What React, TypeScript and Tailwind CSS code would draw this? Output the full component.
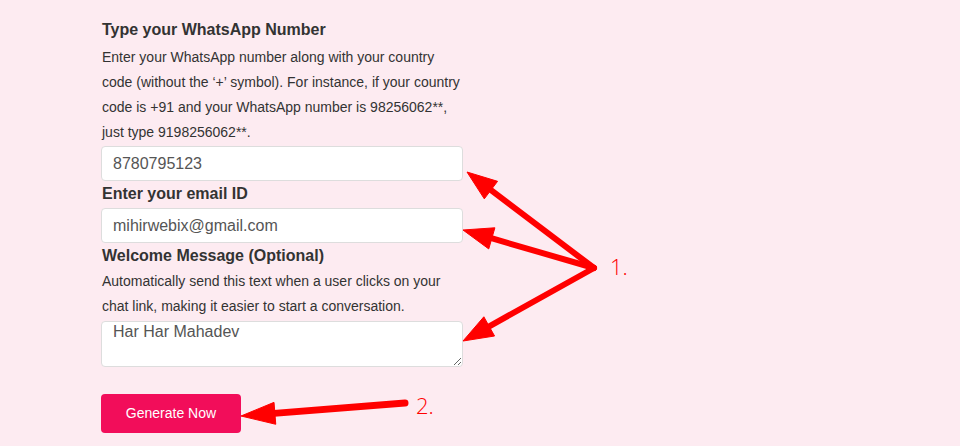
import React from 'react'

type Pt = [number, number]

// arrow with a filled head, geometry worked out from tail -> tip
function Arrow({ from, to, head = 30, half = 11, width = 6 }: { from: Pt; to: Pt; head?: number; half?: number; width?: number }) {
  const dx = to[0] - from[0]
  const dy = to[1] - from[1]
  const len = Math.hypot(dx, dy)
  const ux = dx / len
  const uy = dy / len
  const bx = to[0] - ux * head
  const by = to[1] - uy * head
  const p1 = `${bx - uy * half},${by + ux * half}`
  const p2 = `${bx + uy * half},${by - ux * half}`
  const ex = to[0] - ux * (head - 4)
  const ey = to[1] - uy * (head - 4)
  return (
    <g fill="#ff0000" stroke="#ff0000">
      <line x1={from[0]} y1={from[1]} x2={ex} y2={ey} strokeWidth={width} strokeLinecap="round" />
      <polygon points={`${to[0]},${to[1]} ${p1} ${p2}`} strokeWidth={1} strokeLinejoin="miter" />
    </g>
  )
}

export default function App() {
  return (
    <div className="relative h-[446px] w-[960px] overflow-hidden bg-[#fdebf1] font-['Liberation_Sans',Arial,sans-serif] text-[#333]">
      <div className="ml-[101px] flex w-[362px] flex-col pt-[19px]">
        <h2 className="pl-[1px] text-[16px] font-bold leading-[22px]">Type your WhatsApp Number</h2>
        <p className="mt-[4px] pl-[1px] text-[14px] leading-[25px]">
          Enter your WhatsApp number along with your country code (without the ‘+’ symbol). For instance, if your country
          code is +91 and your WhatsApp number is 98256062**, just type 9198256062**.
        </p>
        <input
          defaultValue="8780795123"
          className="mt-[1px] h-[35px] w-full rounded-[4px] border border-[#ddd] bg-white px-[11px] text-[16px] text-[#555] outline-none"
        />
        <label className="mt-[2px] pl-[1px] text-[16px] font-bold leading-[22px]">Enter your email ID</label>
        <input
          defaultValue="mihirwebix@gmail.com"
          className="mt-[3px] h-[35px] w-full rounded-[4px] border border-[#ddd] bg-white px-[11px] text-[16px] text-[#555] outline-none"
        />
        <label className="mt-[2px] pl-[1px] text-[16px] font-bold leading-[22px]">Welcome Message (Optional)</label>
        <p className="mt-[2px] pl-[1px] text-[14px] leading-[25px]">
          Automatically send this text when a user clicks on your chat link, making it easier to start a conversation.
        </p>
        <textarea
          defaultValue="Har Har Mahadev"
          className="mt-[2px] block h-[46px] w-full rounded-[4px] border border-[#ddd] bg-white px-[11px] pt-[1px] text-[16px] leading-[18px] text-[#555] outline-none"
        />
        <div>
          <button className="mt-[27px] h-[39px] w-[140px] rounded-[4px] bg-[#f20d5a] text-[14px] text-white">
            Generate Now
          </button>
        </div>
      </div>

      <svg className="pointer-events-none absolute left-0 top-0" width="960" height="446">
        <Arrow from={[594, 268]} to={[467, 172]} />
        <Arrow from={[594, 268]} to={[463, 230]} />
        <Arrow from={[594, 268]} to={[463, 341]} />
        <Arrow from={[405, 403]} to={[241, 416]} head={34} half={11} width={7} />
      </svg>
      <span className="absolute left-[610px] top-[252px] font-['Open_Sans',sans-serif] text-[22px] font-light leading-[28px] text-[#ff0000]">
        1.
      </span>
      <span className="absolute left-[416px] top-[391px] font-['Open_Sans',sans-serif] text-[22px] font-light leading-[28px] text-[#ff0000]">
        2.
      </span>
    </div>
  )
}
